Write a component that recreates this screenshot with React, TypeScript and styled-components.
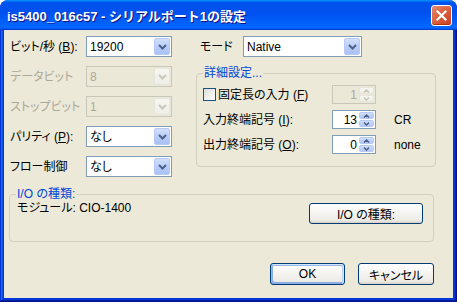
import React from 'react';
import styled, { createGlobalStyle } from 'styled-components';

const GlobalStyle = createGlobalStyle`
  html, body { margin: 0; padding: 0; background: #ffffff; }
  body {
    font-family: "Liberation Sans", "Noto Sans CJK JP", sans-serif;
    font-size: 12px;
    font-feature-settings: "palt";
    color: #000;
  }
  * { box-sizing: border-box; }
`;

const Window = styled.div`
  width: 457px;
  height: 302px;
  display: flex;
  flex-direction: column;
  border-radius: 8px 8px 0 0;
  overflow: hidden;
  background: #0831d9;
`;

const TitleBar = styled.div`
  height: 30px;
  flex: none;
  display: flex;
  align-items: center;
  justify-content: space-between;
  padding: 0 5px 0 7px;
  background: linear-gradient(180deg, #0997ff, #0053ee 8%, #0050ee 40%, #0066ff 88%, #0066ff 93%, #005bff 95%, #003dd7 96%, #003dd7);
`;

const Title = styled.div`
  color: #fff;
  font-family: "Liberation Sans", "Noto Sans CJK JP", sans-serif;
  font-weight: bold;
  font-size: 13px;
  font-feature-settings: normal;
  text-shadow: 1px 1px #0f1089;
  white-space: nowrap;
`;

const CloseButton = styled.div`
  width: 21px;
  height: 21px;
  border: 1px solid #fff;
  border-radius: 3px;
  display: flex;
  align-items: center;
  justify-content: center;
  background: radial-gradient(circle at 90% 90%, #cc4627 0%, #dc5e3c 55%, #e5947d 100%);
  box-shadow: inset 0 -1px 1px #b02e10;
`;

const Frame = styled.div`
  flex: 1;
  display: flex;
  padding: 0 4px 4px 4px;
  box-shadow: inset -1px -1px #00138c, inset 1px 0 #0831d9, inset -2px -2px #001ea0, inset 2px 0 #166aee, inset -3px -3px #003bda, inset 3px 0 #0855dd;
`;

const Client = styled.div`
  flex: 1;
  background: #ece9d8;
  display: flex;
  flex-direction: column;
`;

const TopSection = styled.div`
  display: flex;
  align-items: flex-start;
  padding: 6px 0 0 6px;
`;

const LeftGrid = styled.div`
  display: grid;
  grid-template-columns: 76px 86px;
  grid-auto-rows: 21px;
  row-gap: 9px;
  align-items: center;
`;

const Label = styled.span<{ $disabled?: boolean }>`
  color: ${(p) => (p.$disabled ? '#aca899' : '#000')};
  white-space: nowrap;
  line-height: 14px;
`;

const ComboBox = styled.div<{ $disabled?: boolean }>`
  width: 100%;
  height: 21px;
  border: 1px solid ${(p) => (p.$disabled ? '#c9c7ba' : '#7f9db9')};
  background: ${(p) => (p.$disabled ? '#ebe8d7' : '#fff')};
  color: ${(p) => (p.$disabled ? '#aca899' : '#000')};
  display: flex;
  align-items: center;
  padding-left: 3px;
`;

const ComboValue = styled.span`
  flex: 1;
  white-space: nowrap;
  line-height: 14px;
`;

const ArrowButton = styled.div<{ $disabled?: boolean }>`
  width: 16px;
  height: 17px;
  margin-right: 1px;
  border-radius: 2px;
  display: flex;
  align-items: center;
  justify-content: center;
  border: 1px solid ${(p) => (p.$disabled ? '#e8e6dc' : '#b7caf5')};
  background: ${(p) =>
    p.$disabled
      ? 'linear-gradient(180deg, #f7f6f1, #eeede6)'
      : 'linear-gradient(180deg, #d2dffc, #b6cbf9 60%, #a9c1f5)'};
`;

const RightCol = styled.div`
  margin-left: 24px;
  width: 240px;
  display: flex;
  flex-direction: column;
`;

const ModeRow = styled.div`
  display: grid;
  grid-template-columns: 43px 119px;
  align-items: center;
  padding-left: 4px;
  height: 21px;
`;

const GroupBox = styled.div<{ $mt: number }>`
  position: relative;
  margin-top: ${(p) => p.$mt}px;
  border: 1px solid #d0d0bf;
  border-radius: 4px;
`;

const GroupTitle = styled.span`
  position: absolute;
  top: -8px;
  left: 6px;
  padding: 0 1px;
  line-height: 14px;
  background: #ece9d8;
  color: #0046d5;
  white-space: nowrap;
`;

const DetailGrid = styled.div`
  display: grid;
  grid-template-columns: 129px 44px auto;
  grid-auto-rows: 19px;
  row-gap: 6px;
  align-items: center;
  padding: 11px 0 12px 6px;
`;

const CheckRow = styled.label`
  display: flex;
  align-items: center;
  gap: 2px;
`;

const CheckBox = styled.span`
  width: 13px;
  height: 13px;
  border: 1px solid #1c5180;
  background: linear-gradient(135deg, #dcdcd7, #ffffff);
`;

const Spin = styled.div<{ $disabled?: boolean }>`
  height: 19px;
  border: 1px solid ${(p) => (p.$disabled ? '#c9c7ba' : '#7f9db9')};
  background: ${(p) => (p.$disabled ? '#ebe8d7' : '#fff')};
  color: ${(p) => (p.$disabled ? '#aca899' : '#000')};
  display: flex;
  align-items: center;
`;

const SpinValue = styled.span`
  flex: 1;
  text-align: right;
  padding-right: 2px;
  line-height: 14px;
`;

const SpinButtons = styled.div`
  width: 15px;
  height: 15px;
  margin-right: 1px;
  display: flex;
  flex-direction: column;
  gap: 1px;
`;

const SpinHalf = styled.div<{ $disabled?: boolean }>`
  flex: 1;
  border-radius: 2px;
  display: flex;
  align-items: center;
  justify-content: center;
  border: 1px solid ${(p) => (p.$disabled ? '#e8e6dc' : '#b7caf5')};
  background: ${(p) =>
    p.$disabled
      ? 'linear-gradient(180deg, #f7f6f1, #eeede6)'
      : 'linear-gradient(180deg, #d2dffc, #b0c6f7)'};
`;

const Unit = styled.span`
  margin-left: 18px;
  line-height: 14px;
`;

const IoBody = styled.div`
  display: flex;
  justify-content: space-between;
  align-items: flex-start;
  height: 46px;
  padding: 6px 10px 0 7px;
`;

const IoText = styled.span`
  line-height: 14px;
  white-space: nowrap;
`;

const IoGroupWrap = styled.div`
  margin-left: 5px;
  width: 425px;
`;

const PushButton = styled.button<{ $default?: boolean; $width: number; $mt?: number }>`
  width: ${(p) => p.$width}px;
  height: ${(p) => (p.$default !== undefined ? 22 : 21)}px;
  margin-top: ${(p) => p.$mt ?? 0}px;
  border: 1px solid #003c74;
  border-radius: 3px;
  font: inherit;
  color: #000;
  padding: 0;
  background: linear-gradient(180deg, #ffffff, #ecebe6 86%, #d6d0c5);
  box-shadow: ${(p) =>
    p.$default
      ? 'inset -1px 1px #cee7ff, inset 1px 2px #98b8ea, inset -2px 2px #bcd4f6, inset 1px -1px #89ade4, inset 2px -2px #89ade4'
      : 'none'};
  white-space: nowrap;
`;

const ButtonRow = styled.div`
  display: flex;
  justify-content: flex-end;
  gap: 13px;
  margin-top: 21px;
  padding-right: 19px;
`;

const Chevron = ({ disabled }: { disabled?: boolean }) => (
  <svg width="9" height="6" viewBox="0 0 9 6">
    <path d="M1 1 L4.5 4.5 L8 1" fill="none" stroke={disabled ? '#c9c7ba' : '#4d6185'} strokeWidth="2" />
  </svg>
);

const SmallChevron = ({ up, disabled }: { up?: boolean; disabled?: boolean }) => (
  <svg width="7" height="4" viewBox="0 0 7 4">
    <path
      d={up ? 'M1 3.5 L3.5 1 L6 3.5' : 'M1 0.5 L3.5 3 L6 0.5'}
      fill="none"
      stroke={disabled ? '#c9c7ba' : '#4d6185'}
      strokeWidth="1.5"
    />
  </svg>
);

const Combo = ({ value, disabled }: { value: string; disabled?: boolean }) => (
  <ComboBox $disabled={disabled}>
    <ComboValue>{value}</ComboValue>
    <ArrowButton $disabled={disabled}>
      <Chevron disabled={disabled} />
    </ArrowButton>
  </ComboBox>
);

const SpinBox = ({ value, disabled }: { value: string; disabled?: boolean }) => (
  <Spin $disabled={disabled}>
    <SpinValue>{value}</SpinValue>
    <SpinButtons>
      <SpinHalf $disabled={disabled}>
        <SmallChevron up disabled={disabled} />
      </SpinHalf>
      <SpinHalf $disabled={disabled}>
        <SmallChevron disabled={disabled} />
      </SpinHalf>
    </SpinButtons>
  </Spin>
);

export default function App() {
  return (
    <>
      <GlobalStyle />
      <Window>
        <TitleBar>
          <Title>is5400_016c57 - シリアルポート1の設定</Title>
          <CloseButton>
            <svg width="13" height="13" viewBox="0 0 13 13">
              <path d="M2.5 2.5 L10.5 10.5 M10.5 2.5 L2.5 10.5" stroke="#fff" strokeWidth="2.2" strokeLinecap="square" />
            </svg>
          </CloseButton>
        </TitleBar>
        <Frame>
          <Client>
            <TopSection>
              <LeftGrid>
                <Label>ビット/秒 (<u>B</u>):</Label>
                <Combo value="19200" />
                <Label $disabled>データビット</Label>
                <Combo value="8" disabled />
                <Label $disabled>ストップビット</Label>
                <Combo value="1" disabled />
                <Label>パリティ (<u>P</u>):</Label>
                <Combo value="なし" />
                <Label>フロー制御</Label>
                <Combo value="なし" />
              </LeftGrid>
              <RightCol>
                <ModeRow>
                  <Label>モード</Label>
                  <Combo value="Native" />
                </ModeRow>
                <GroupBox $mt={16}>
                  <GroupTitle>詳細設定...</GroupTitle>
                  <DetailGrid>
                    <CheckRow>
                      <CheckBox />
                      <Label>固定長の入力 (<u>F</u>)</Label>
                    </CheckRow>
                    <SpinBox value="1" disabled />
                    <span />
                    <Label>入力終端記号 (<u>I</u>):</Label>
                    <SpinBox value="13" />
                    <Unit>CR</Unit>
                    <Label>出力終端記号 (<u>O</u>):</Label>
                    <SpinBox value="0" />
                    <Unit>none</Unit>
                  </DetailGrid>
                </GroupBox>
              </RightCol>
            </TopSection>
            <IoGroupWrap>
              <GroupBox $mt={17}>
                <GroupTitle>I/O の種類:</GroupTitle>
                <IoBody>
                  <IoText>モジュール: CIO-1400</IoText>
                  <PushButton $width={114} $mt={2}>I/O の種類:</PushButton>
                </IoBody>
              </GroupBox>
            </IoGroupWrap>
            <ButtonRow>
              <PushButton $width={75} $default>OK</PushButton>
              <PushButton $width={76} $default={false}>キャンセル</PushButton>
            </ButtonRow>
          </Client>
        </Frame>
      </Window>
    </>
  );
}
